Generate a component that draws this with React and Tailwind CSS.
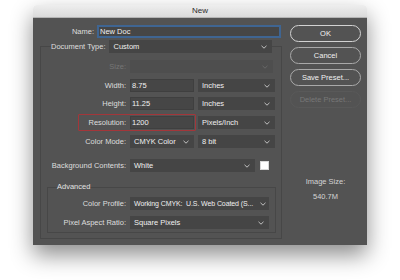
import React from "react";

const font = { fontFamily: '"Liberation Sans", Arial, sans-serif' };

function Chevron({ dim }) {
  return (
    <svg width="6" height="4" viewBox="0 0 6 4" className="shrink-0">
      <polyline
        points="0.5,0.8 3,3.2 5.5,0.8"
        fill="none"
        stroke={dim ? "#6a6a6a" : "#cfcfcf"}
        strokeWidth="0.9"
      />
    </svg>
  );
}

function Select({ w, value, disabled }) {
  return (
    <div
      className={`flex h-[13px] items-center justify-between pl-[4px] pr-[5px] shrink-0 ${
        disabled ? "bg-[#4e4e4e]" : "bg-[#454545]"
      } ${w}`}
    >
      <span className="whitespace-pre text-[#f0f0f0]">{value}</span>
      <Chevron dim={disabled} />
    </div>
  );
}

function Input({ w, value }) {
  return (
    <div
      className={`flex h-[13px] items-center border border-[#3f3f3f] bg-[#464646] pl-[1px] text-[#f0f0f0] shrink-0 ${w}`}
    >
      {value}
    </div>
  );
}

function Row({ label, children, lw = "w-[85px]", dim, mt, overlay }) {
  return (
    <div className={`relative flex h-[13px] items-center ${mt}`}>
      <div className={`shrink-0 text-right ${lw} ${dim ? "text-[#767676]" : "text-[#dedede]"}`}>
        {label}
      </div>
      <div className="ml-[4px] flex items-center">{children}</div>
      {overlay}
    </div>
  );
}

function Button({ children, primary, disabled, mt }) {
  return (
    <div
      className={`flex h-[17px] w-[71px] items-center justify-center rounded-full border ${
        primary
          ? "border-[#d2d2d2] text-[#f4f4f4]"
          : disabled
          ? "border-[#595959] text-[#777777]"
          : "border-[#a9a9a9] text-[#f0f0f0]"
      } ${mt}`}
    >
      {children}
    </div>
  );
}

export default function App() {
  return (
    <div className="min-h-[280px] w-[400px] bg-white pt-[5px] text-[7.5px] leading-none" style={font}>
      <div className="ml-[33px] flex h-[240px] w-[334px] flex-col overflow-hidden rounded-t-[4px] shadow-[0_10px_22px_rgba(0,0,0,0.45)]">
        <div className="flex h-[13px] shrink-0 items-center justify-center border-b border-[#b4b4b4] bg-gradient-to-b from-[#eeeeee] to-[#dadada] text-[8px] text-[#2b2b2b]">
          New
        </div>
        <div className="flex flex-1 bg-[#535353]">
          {/* left column */}
          <div className="w-[249px] pl-[7px] pt-[7px]">
            <div className="flex h-[13px] items-center">
              <div className="w-[54px] text-right text-[#dedede]">Name:</div>
              <div className="ml-[3px] flex h-[13px] w-[184px] items-center border-2 border-[#3f6592] bg-[#464646] pl-[1px] text-[#f0f0f0]">
                New Doc
              </div>
            </div>
            <fieldset className="mt-[2px] w-[242px] border border-[#474747] pb-[5px]">
              <legend className="ml-[10px]">
                <div className="flex h-[13px] items-center">
                  <span className="text-[#dedede]">Document Type:</span>
                  <div className="ml-[4px]">
                    <Select w="w-[163px]" value="Custom" />
                  </div>
                </div>
              </legend>
              <Row label="Size:" dim mt="mt-[7px]">
                <Select w="w-[143px]" value="" disabled />
              </Row>
              <Row label="Width:" mt="mt-[6px]">
                <Input w="w-[64px]" value="8.75" />
                <div className="ml-[4px]">
                  <Select w="w-[77px]" value="Inches" />
                </div>
              </Row>
              <Row label="Height:" mt="mt-[5px]">
                <Input w="w-[64px]" value="11.25" />
                <div className="ml-[4px]">
                  <Select w="w-[77px]" value="Inches" />
                </div>
              </Row>
              <Row
                label="Resolution:"
                mt="mt-[6px]"
                overlay={
                  <div className="pointer-events-none absolute left-[37px] top-[-2px] h-[17px] w-[118px] rounded-[1px] border-[1.5px] border-[#a3363a]" />
                }
              >
                <Input w="w-[64px]" value="1200" />
                <div className="ml-[4px]">
                  <Select w="w-[77px]" value="Pixels/Inch" />
                </div>
              </Row>
              <Row label="Color Mode:" mt="mt-[6px]">
                <Select w="w-[64px]" value="CMYK Color" />
                <div className="ml-[4px]">
                  <Select w="w-[77px]" value="8 bit" />
                </div>
              </Row>
              <Row label="Background Contents:" mt="mt-[11px]">
                <Select w="w-[125px]" value="White" />
                <div className="ml-[5px] h-[9px] w-[9px] border border-[#d8d8d8] bg-white" />
              </Row>
              <fieldset className="ml-[6px] mt-[9px] w-[229px] border border-[#474747] pb-[3px]">
                <legend className="ml-[9px] h-[12px] leading-[12px] text-[#e2e2e2]">Advanced</legend>
                <Row label="Color Profile:" lw="w-[78px]" mt="mt-[4px]">
                  <div className="flex h-[13px] w-[139px] items-center justify-between bg-[#454545] pl-[4px] pr-[3px]">
                    <span className="whitespace-pre text-[7px] tracking-[-0.1px] text-[#f0f0f0]">
                      Working CMYK:  U.S. Web Coated (S...
                    </span>
                    <Chevron />
                  </div>
                </Row>
                <Row label="Pixel Aspect Ratio:" lw="w-[78px]" mt="mt-[6px]">
                  <Select w="w-[139px]" value="Square Pixels" />
                </Row>
              </fieldset>
            </fieldset>
          </div>
          {/* right column */}
          <div className="flex w-[85px] flex-col items-start pl-[8px] pt-[7px]">
            <Button primary>OK</Button>
            <Button mt="mt-[5px]">Cancel</Button>
            <Button mt="mt-[5px]">Save Preset...</Button>
            <Button disabled mt="mt-[5px]">Delete Preset...</Button>
            <div className="mt-[70px] w-[71px] text-center text-[#d4d4d4]">Image Size:</div>
            <div className="mt-[7px] w-[71px] text-center text-[#d4d4d4]">540.7M</div>
          </div>
        </div>
      </div>
    </div>
  );
}
